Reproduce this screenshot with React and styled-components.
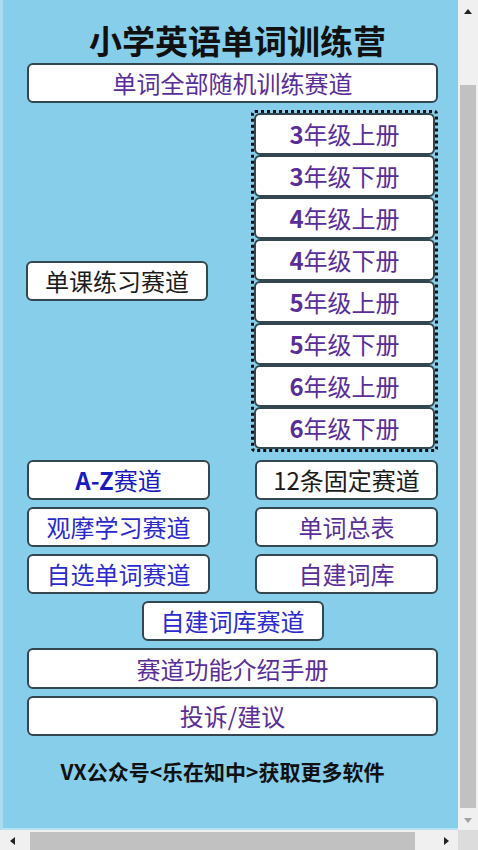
import styled, { createGlobalStyle } from 'styled-components';

const GlobalStyle = createGlobalStyle`
	html, body {
		margin: 0;
		padding: 0;
		overflow: hidden;
		background: #f0f0f0;
	}
	* {
		box-sizing: border-box;
	}
`;

const Frame = styled.div`
	display: grid;
	grid-template-columns: 1fr 20px;
	grid-template-rows: 1fr 20px;
	width: 478px;
	height: 850px;
	font-family: 'Noto Sans CJK SC', 'Noto Sans', sans-serif;
`;

const Canvas = styled.main`
	background: #87ceeb;
	border-left: 3px solid #a9dcef;
	border-bottom: 2px solid #b6e3f3;
	overflow: hidden;
	padding: 0 0 0 24px;
`;

const Title = styled.h1`
	margin: 0;
	padding: 20px 0 0 10px;
	width: 411px;
	height: 60px;
	font-size: 33px;
	line-height: 40px;
	font-weight: 700;
	text-align: center;
	color: #111;
`;

const Stack = styled.div`
	display: flex;
	flex-direction: column;
	gap: 7px;
	width: 411px;
	margin-top: 3px;
`;

const Button = styled.button`
	display: flex;
	align-items: center;
	justify-content: center;
	flex: none;
	width: ${(p) => p.$width || '100%'};
	height: ${(p) => p.$height || '40px'};
	padding: 0;
	background: #fff;
	border: 2px solid #34464f;
	border-radius: 6px;
	font-family: inherit;
	font-size: 24px;
	line-height: 1;
	font-weight: ${(p) => (p.$bold ? 700 : 400)};
	color: ${(p) => p.$color || '#5a2e98'};
	align-self: ${(p) => p.$align || 'auto'};
	cursor: pointer;
`;

const Middle = styled.div`
	display: flex;
	align-items: center;
	justify-content: space-between;
	margin: 0 0 1px -1px;
`;

const GradeBox = styled.div`
	display: flex;
	flex-direction: column;
	width: 187px;
	height: 342px;
	border: 3px dotted #111;
	border-radius: 4px;
`;

const Num = styled.span`
	font-weight: 700;
`;

const Plain = styled.span`
	font-weight: 400;
`;

const Pair = styled.div`
	display: grid;
	grid-template-columns: 183px 183px;
	justify-content: space-between;
`;

const Footer = styled.p`
	margin: 23px 0 0;
	padding-right: 20px;
	width: 411px;
	font-size: 21px;
	line-height: 25px;
	font-weight: 700;
	text-align: center;
	color: #111;
`;

const VBar = styled.div`
	display: flex;
	flex-direction: column;
	background: #f0f0f0;
	padding: 0 2px;
`;

const HBar = styled.div`
	display: flex;
	background: #f0f0f0;
	padding-top: 2px;
`;

const Corner = styled.div`
	background: #dcdcdc;
`;

const Arrow = styled.div`
	display: flex;
	align-items: center;
	justify-content: center;
	flex: none;
	width: ${(p) => p.$w};
	height: ${(p) => p.$h};
	&::after {
		content: '';
		width: 0;
		height: 0;
		border: 4px solid transparent;
		${(p) => p.$dir === 'up' && `border-bottom: 5px solid ${p.$c}; border-top-width: 0;`}
		${(p) => p.$dir === 'down' && `border-top: 5px solid ${p.$c}; border-bottom-width: 0;`}
		${(p) => p.$dir === 'left' && `border-right: 5px solid ${p.$c}; border-left-width: 0;`}
		${(p) => p.$dir === 'right' && `border-left: 5px solid ${p.$c}; border-right-width: 0;`}
	}
`;

const Thumb = styled.div`
	flex: 1;
	background: #c1c1c1;
	margin: ${(p) => p.$margin};
`;

const grades = ['3', '4', '5', '6'].flatMap((n) => [
	[n, '年级上册'],
	[n, '年级下册'],
]);

const BLUE = '#2b2bcc';
const DARK = '#1c1c1c';

const App = () => {
	return (
		<>
			<GlobalStyle />
			<Frame>
				<Canvas>
					<Title>小学英语单词训练营</Title>
					<Stack>
						<Button>单词全部随机训练赛道</Button>
						<Middle>
							<Button $width="182px" $color={DARK}>
								单课练习赛道
							</Button>
							<GradeBox>
								{grades.map(([n, t]) => (
									<Button key={n + t} $height="42px">
										<Num>{n}</Num>
										{t}
									</Button>
								))}
							</GradeBox>
						</Middle>
						<Pair>
							<Button $color="#1a1ac0" $bold>
								A-Z<Plain>赛道</Plain>
							</Button>
							<Button $color={DARK}>12条固定赛道</Button>
						</Pair>
						<Pair>
							<Button $color={BLUE}>观摩学习赛道</Button>
							<Button>单词总表</Button>
						</Pair>
						<Pair>
							<Button $color={BLUE}>自选单词赛道</Button>
							<Button>自建词库</Button>
						</Pair>
						<Button $width="182px" $align="center" $color={BLUE}>
							自建词库赛道
						</Button>
						<Button $height="41px">赛道功能介绍手册</Button>
						<Button>投诉/建议</Button>
					</Stack>
					<Footer>VX公众号&lt;乐在知中&gt;获取更多软件</Footer>
				</Canvas>
				<VBar>
					<Arrow $dir="up" $c="#222" $w="100%" $h="22px" />
					<Thumb $margin="63px 0 2px" />
					<Arrow $dir="down" $c="#a3a3a3" $w="100%" $h="20px" />
				</VBar>
				<HBar>
					<Arrow $dir="left" $c="#222" $w="24px" $h="100%" />
					<Thumb $margin="0 19px 0 6px" />
					<Arrow $dir="right" $c="#222" $w="24px" $h="100%" />
				</HBar>
				<Corner />
			</Frame>
		</>
	);
};

export default App;
